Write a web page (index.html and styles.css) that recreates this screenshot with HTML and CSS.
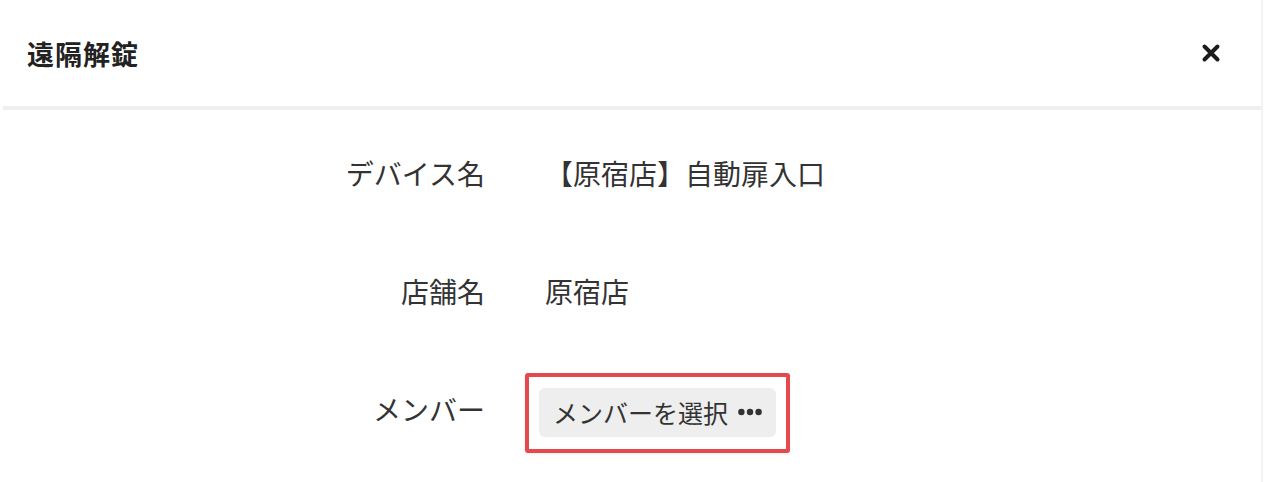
FILE: index.html
```html
<!DOCTYPE html>
<html lang="ja">
<head>
    <meta charset="UTF-8">
    <meta name="viewport" content="width=device-width, initial-scale=1.0">
    <title>遠隔解錠</title>
    <link rel="stylesheet" href="styles.css">
</head>
<body>
    <div class="modal">
        <header class="modal-header">
            <h1>遠隔解錠</h1>
            <button class="close" aria-label="閉じる">
                <svg width="20" height="20" viewBox="0 0 20 20">
                    <path d="M3.5 3.5 L16.5 16.5 M16.5 3.5 L3.5 16.5" stroke="#1c1c1c" stroke-width="4" stroke-linecap="round" fill="none"/>
                </svg>
            </button>
        </header>

        <div class="modal-body">
            <div class="row">
                <div class="label">デバイス名</div>
                <div class="value">【原宿店】自動扉入口</div>
            </div>
            <div class="row">
                <div class="label">店舗名</div>
                <div class="value">原宿店</div>
            </div>
            <div class="row">
                <div class="label">メンバー</div>
                <div class="value">
                    <div class="highlight">
                        <button class="select-btn">
                            メンバーを選択
                            <svg width="24" height="8" viewBox="0 0 24 8">
                                <circle cx="3.4" cy="4" r="3.2" fill="#333"/>
                                <circle cx="12" cy="4" r="3.2" fill="#333"/>
                                <circle cx="20.6" cy="4" r="3.2" fill="#333"/>
                            </svg>
                        </button>
                    </div>
                </div>
            </div>
        </div>
    </div>
</body>
</html>
```

FILE: styles.css
```css
body {
    margin: 0;
    background-color: #fff;
    font-family: "Noto Sans CJK JP", "Noto Sans", sans-serif;
    color: #333;
}
.modal {
    margin-left: 3px;
    width: 1260px;
    height: 482px;
    border-right: 2px solid #f3f3f3;
    box-sizing: border-box;
}
.modal-header {
    height: 106px;
    border-bottom: 4px solid #efefef;
    display: flex;
    align-items: center;
    justify-content: space-between;
    padding: 0 40px 0 24px;
    box-sizing: content-box;
}
.modal-header h1 {
    margin: 0;
    font-size: 27px;
    font-weight: bold;
    color: #222;
    letter-spacing: 1px;
}
.close {
    border: none;
    background: none;
    padding: 0;
    width: 20px;
    height: 20px;
    display: flex;
    cursor: pointer;
}
.modal-body {
    padding-top: 4px;
}
.row {
    display: grid;
    grid-template-columns: 482px 1fr;
    column-gap: 60px;
    align-items: center;
    height: 118px;
    font-size: 28px;
}
.label {
    text-align: right;
}
.highlight {
    display: inline-block;
    margin: 7px 0 0 -20px;
    border: 4px solid #e5484f;
    border-radius: 3px;
    padding: 11px 10px 12px;
    box-shadow: 0 1px 3px rgba(0, 0, 0, 0.08);
}
.select-btn {
    display: flex;
    align-items: center;
    gap: 10px;
    height: 49px;
    padding: 0 14px;
    border: none;
    border-radius: 6px;
    background-color: #eee;
    font-family: inherit;
    font-size: 25px;
    color: #333;
    cursor: pointer;
}
```
